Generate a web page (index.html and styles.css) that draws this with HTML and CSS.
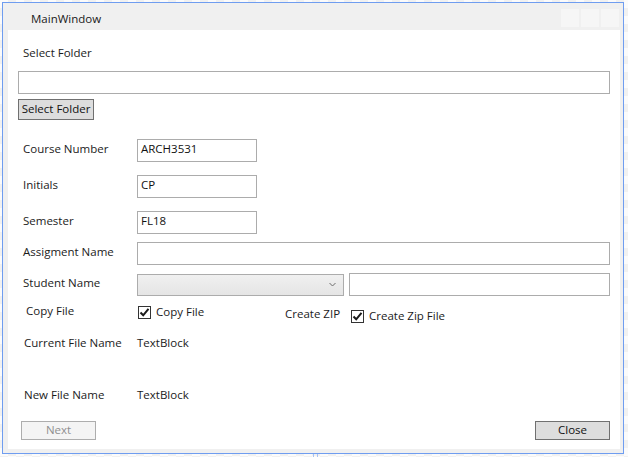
FILE: index.html
```html
<!DOCTYPE html>
<html>
<head>
<meta charset="utf-8">
<title>MainWindow</title>
<link rel="stylesheet" href="styles.css">
</head>
<body>
<div class="canvas">
  <div class="window">
    <div class="titlebar">
      <span class="title">MainWindow</span>
      <div class="caption-btns"><span></span><span></span><span></span></div>
    </div>
    <div class="client">
      <div class="top-lbl">Select Folder</div>
      <div class="textbox path-box"></div>
      <div class="btn btn-select">Select Folder</div>

      <div class="row row-first">
        <span class="rl">Course Number</span>
        <div class="textbox short">ARCH3531</div>
      </div>
      <div class="row row-gap13">
        <span class="rl">Initials</span>
        <div class="textbox short">CP</div>
      </div>
      <div class="row row-gap13">
        <span class="rl">Semester</span>
        <div class="textbox short">FL18</div>
      </div>
      <div class="row row-gap8">
        <span class="rl">Assigment Name</span>
        <div class="textbox long"></div>
      </div>
      <div class="row row-gap8">
        <span class="rl">Student Name</span>
        <div class="combo">
          <svg class="chev" width="7" height="5" viewBox="0 0 7 5"><path d="M0.5 1 L3.5 4 L6.5 1" fill="none" stroke="#6d6d6d" stroke-width="1"/></svg>
        </div>
        <div class="textbox student"></div>
      </div>

      <div class="check-row">
        <span class="cl-copy">Copy File</span>
        <label class="chk chk-copy">
          <span class="box"><svg width="11" height="11" viewBox="0 0 11 11"><path d="M1.5 5.5 L4.2 8.3 L9.5 1.8" fill="none" stroke="#1a1a1a" stroke-width="2"/></svg></span>
          <span>Copy File</span>
        </label>
        <span class="cl-zip">Create ZIP</span>
        <label class="chk chk-zip">
          <span class="box"><svg width="11" height="11" viewBox="0 0 11 11"><path d="M1.5 5.5 L4.2 8.3 L9.5 1.8" fill="none" stroke="#1a1a1a" stroke-width="2"/></svg></span>
          <span>Create Zip File</span>
        </label>
      </div>

      <div class="info info-current">
        <span class="il">Current File Name</span>
        <span>TextBlock</span>
      </div>
      <div class="info info-new">
        <span class="il">New File Name</span>
        <span>TextBlock</span>
      </div>

      <div class="btn-row">
        <div class="btn btn-next">Next</div>
        <div class="btn btn-close">Close</div>
      </div>
    </div>
  </div>
  <div class="adorner"></div>
</div>
</body>
</html>
```

FILE: styles.css
```css
html, body {
  margin: 0;
  padding: 0;
}

body {
  width: 628px;
  height: 457px;
  overflow: hidden;
  font-family: "Segoe UI", "Open Sans", "Noto Sans", sans-serif;
  font-size: 11.5px;
  color: #1b1b1b;
  background-color: #fbfbfb;
  background-image: repeating-conic-gradient(#f1f1f1 0 25%, #fbfbfb 0 50%);
  background-size: 16px 16px;
}

.canvas {
  padding: 2px 0 0 2px;
}

.window {
  box-sizing: border-box;
  width: 622px;
  height: 452px;
  border: 1px solid #6f9df0;
  background: #f0f0f0;
  padding: 0 3px 4px 5px;
}

.titlebar {
  height: 27px;
  display: flex;
  align-items: flex-start;
  justify-content: space-between;
}

.title {
  margin: 8px 0 0 23px;
  line-height: 16px;
  color: #1a1a1a;
}

.caption-btns {
  display: flex;
  gap: 2px;
  margin: 6px 1px 0 0;
}

.caption-btns span {
  width: 18px;
  height: 18px;
  background: #f6f6f6;
}

.client {
  box-sizing: border-box;
  height: 419px;
  background: #ffffff;
  display: flex;
  flex-direction: column;
  align-items: flex-start;
}

.top-lbl {
  box-sizing: border-box;
  height: 41px;
  padding: 14px 0 0 15px;
  line-height: 18px;
}

.textbox {
  box-sizing: border-box;
  height: 23px;
  border: 1px solid #acacac;
  background: #ffffff;
  padding: 0 3px;
  line-height: 18px;
  color: #111;
}

.path-box {
  margin-left: 10px;
  width: 592px;
}

.btn {
  box-sizing: border-box;
  text-align: center;
  border: 1px solid #707070;
  background: #dddddd;
  color: #111;
}

.btn-select {
  margin: 5px 0 0 10px;
  width: 76px;
  height: 21px;
  line-height: 18px;
}

.row {
  display: flex;
  align-items: center;
  height: 23px;
  width: 100%;
}

.row-first { margin-top: 19px; }
.row-gap13 { margin-top: 13px; }
.row-gap8 { margin-top: 8px; }

.rl {
  box-sizing: border-box;
  width: 129px;
  padding-left: 15px;
  line-height: 18px;
  margin-top: -4px;
}

.short { width: 120px; }
.long { width: 473px; }

.combo {
  box-sizing: border-box;
  width: 207px;
  height: 22px;
  border: 1px solid #acacac;
  background: linear-gradient(#f0f0f0, #e5e5e5);
  display: flex;
  align-items: center;
  justify-content: flex-end;
  padding-right: 7px;
}

.student {
  margin-left: 5px;
  width: 261px;
}

.check-row {
  display: flex;
  align-items: flex-start;
  height: 20px;
  margin-top: 9px;
  width: 100%;
}

.cl-copy {
  width: 112px;
  padding-left: 18px;
  margin-top: -2px;
  line-height: 16px;
}

.chk {
  display: flex;
  align-items: center;
  gap: 5px;
  line-height: 16px;
}

.chk .box {
  box-sizing: border-box;
  width: 13px;
  height: 13px;
  border: 1px solid #333333;
  background: #fff;
  display: flex;
  align-items: center;
  justify-content: center;
}

.chk-copy {
  width: 147px;
  margin-top: -1px;
}

.cl-zip {
  width: 66px;
  margin-top: 1px;
  line-height: 16px;
}

.chk-zip {
  margin-top: 3px;
}

.info {
  display: flex;
  line-height: 18px;
  height: 18px;
}

.il {
  box-sizing: border-box;
  width: 129px;
  padding-left: 16px;
}

.info-current { margin-top: 9px; }
.info-new { margin-top: 34px; }

.btn-row {
  margin-top: 17px;
  width: 100%;
  display: flex;
  justify-content: space-between;
  box-sizing: border-box;
  padding: 0 10px 0 13px;
}

.btn-next,
.btn-close {
  width: 75px;
  height: 19px;
  line-height: 16px;
}

.btn-next {
  border-color: #adadad;
  background: #f4f4f4;
  color: #8f8f8f;
}

.adorner {
  margin-left: 311px;
  width: 3px;
  height: 6px;
  border-left: 1px solid #a9c2f2;
  border-right: 1px solid #a9c2f2;
}
```
